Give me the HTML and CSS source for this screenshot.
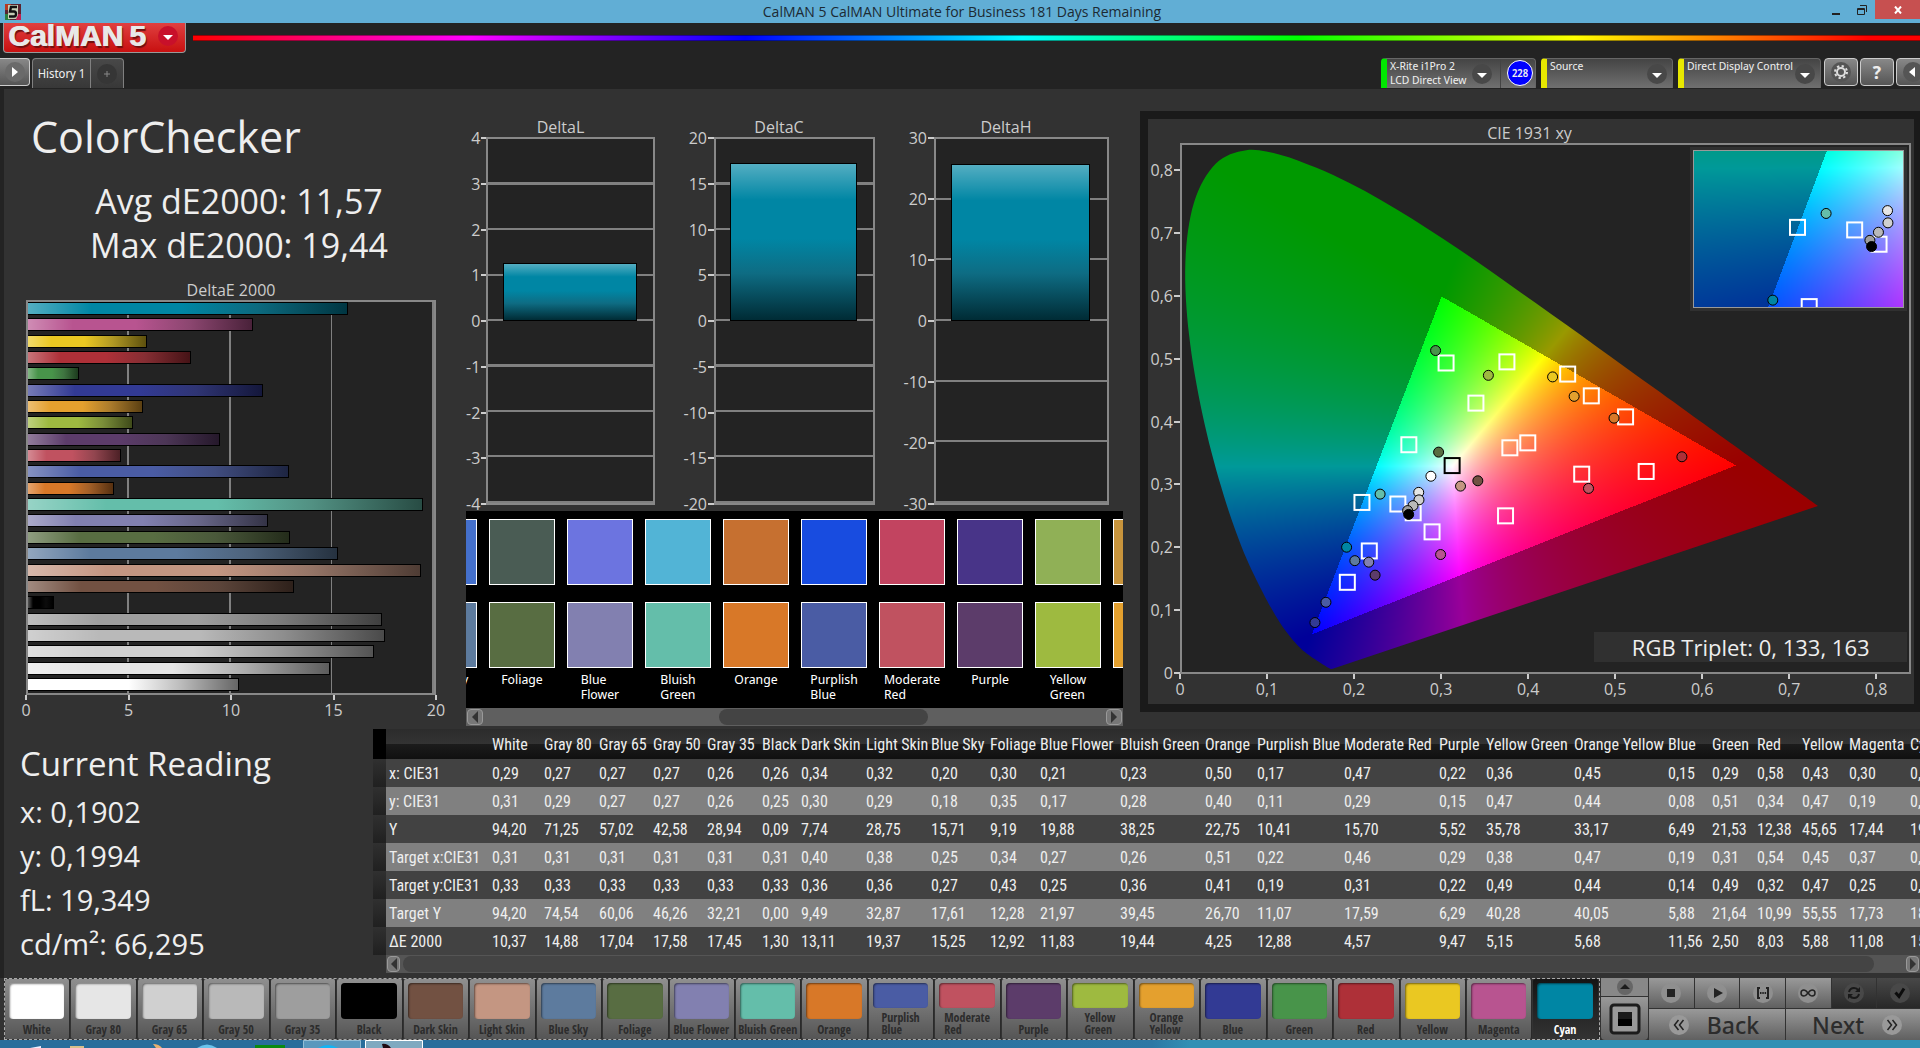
FILE: index.html
```html
<!DOCTYPE html>
<html lang="en">
	<head>
		<meta charset="utf-8">
		<title>CalMAN 5</title>
		<link rel="stylesheet" href="styles.css">
	</head>
	<body>
		<div class="titlebar">
			<svg class="app-icon" width="16" height="16" viewBox="0 0 16 16">
				<rect width="16" height="16" fill="#5a2430"/>
				<rect width="6" height="6" fill="#b33a22"/>
				<rect x="11" y="10" width="5" height="6" fill="#c02050"/>
				<rect y="10" width="5" height="6" fill="#2a8040"/>
				<path d="M3 1h10v10l-2 4H3z" fill="#c4ccb4"/>
				<path d="M12 3H6L5 7.500h4q2 0 2 2.500T9 12.500H4" fill="none" stroke="#111" stroke-width="2.400"/>
			</svg>
			<span class="window-title">CalMAN 5 CalMAN Ultimate for Business 181 Days Remaining</span>
			<div class="window-buttons">
				<button aria-label="Minimize"><svg width="8" height="10"><rect y="8" width="8" height="2" fill="#222"/></svg></button>
				<button aria-label="Restore"><svg width="10" height="10"><path d="M.5 3.500h7v6h-7zM3 .5h6.500V7M1 4.500h6" fill="none" stroke="#222"/></svg></button>
				<button class="close" aria-label="Close"><svg width="8" height="8"><path d="M1 0.500l6 7M7 0.500l-6 7" stroke="#fff" stroke-width="2"/></svg></button>
			</div>
		</div>

		<div class="brand-row">
			<button class="logo"><span>CalMAN</span><b>5</b>
				<svg class="round" width="20" height="20"><circle cx="10" cy="10" r="10" fill="#c8102a"/><path d="M5 9h10l-5 5z" fill="#fff"/></svg>
			</button>
			<div class="rainbow"></div>
		</div>

		<div class="tool-row">
			<button class="side-button" aria-label="Expand"><svg width="20" height="20"><circle cx="10" cy="10" r="10" fill="#6a6a6a"/><path d="M7 5l6 5-6 5z" fill="#fff"/></svg></button>
			<div class="tabs">
				<button>History 1</button>
				<button class="add" aria-label="Add tab"><svg width="20" height="20"><circle cx="10" cy="10" r="10" fill="#363636"/><path d="M7 10h6M10 7v6" stroke="#888"/></svg></button>
			</div>
			<div class="devices">
				<div class="device meter">
					<button class="device-name"><span>X-Rite i1Pro 2<br>LCD Direct View</span><svg width="20" height="20"><circle cx="10" cy="10" r="10" fill="#484848"/><path d="M5 9h10l-5 5z" fill="#fff"/></svg></button>
					<button class="count">228</button>
				</div>
				<div class="device source">
					<button class="device-name"><span>Source</span><svg width="20" height="20"><circle cx="10" cy="10" r="10" fill="#484848"/><path d="M5 9h10l-5 5z" fill="#fff"/></svg></button>
				</div>
				<div class="device display">
					<button class="device-name"><span>Direct Display Control</span><svg width="20" height="20"><circle cx="10" cy="10" r="10" fill="#484848"/><path d="M5 9h10l-5 5z" fill="#fff"/></svg></button>
				</div>
				<button class="square" aria-label="Settings"><svg width="20" height="20"><circle cx="10" cy="10" r="10" fill="#555"/><circle cx="10" cy="10" r="4" fill="none" stroke="#ddd" stroke-width="2"/><circle cx="10" cy="10" r="6" fill="none" stroke="#ddd" stroke-width="2" stroke-dasharray="2.300 2.400"/></svg></button>
				<button class="square help" aria-label="Help">?</button>
				<button class="square" aria-label="Collapse"><svg width="20" height="20"><circle cx="10" cy="10" r="10" fill="#555"/><path d="M12 5l-6 5 6 5z" fill="#fff"/></svg></button>
			</div>
		</div>

		<main>
			<section class="overview">
				<div class="summary">
					<h1>ColorChecker</h1>
					<p>Avg dE2000: 11,57<br>Max dE2000: 19,44</p>
					<h2 class="chart-title">DeltaE 2000</h2>
					<div class="plot de-plot" id="de_bars"></div>
					<div class="x-axis five"><span>0</span><span>5</span><span>10</span><span>15</span><span>20</span></div>
				</div>

				<div class="middle">
					<div class="deltas">
						<div class="delta">
							<h2 class="chart-title">DeltaL</h2>
							<div class="y-axis"><span>4</span><span>3</span><span>2</span><span>1</span><span>0</span><span>-1</span><span>-2</span><span>-3</span><span>-4</span></div>
							<div class="plot eight"><div class="positive"><div class="bar" style="height: 32%"></div></div></div>
						</div>
						<div class="delta">
							<h2 class="chart-title">DeltaC</h2>
							<div class="y-axis"><span>20</span><span>15</span><span>10</span><span>5</span><span>0</span><span>-5</span><span>-10</span><span>-15</span><span>-20</span></div>
							<div class="plot eight"><div class="positive"><div class="bar" style="height: 87%"></div></div></div>
						</div>
						<div class="delta">
							<h2 class="chart-title">DeltaH</h2>
							<div class="y-axis"><span>30</span><span>20</span><span>10</span><span>0</span><span>-10</span><span>-20</span><span>-30</span></div>
							<div class="plot six"><div class="positive"><div class="bar" style="height: 86%"></div></div></div>
						</div>
					</div>
					<div class="compare"><div class="strip" id="compare"></div></div>
					<div class="scrollbar compare-scroll">
						<button aria-label="Scroll left"><svg width="8" height="12"><path d="M7 0v12L1 6z" fill="#333"/></svg></button>
						<i class="thumb"></i>
						<button aria-label="Scroll right"><svg width="8" height="12"><path d="M1 0v12l6-6z" fill="#333"/></svg></button>
					</div>
				</div>

				<div class="cie">
					<h2 class="chart-title">CIE 1931 xy</h2>
					<div class="y-axis cie-y"><span>0,8</span><span>0,7</span><span>0,6</span><span>0,5</span><span>0,4</span><span>0,3</span><span>0,2</span><span>0,1</span><span>0</span></div>
					<div class="plot cie-plot">
						<canvas id="cie"></canvas>
						<svg class="points" id="cie_points"></svg>
						<div class="inset">
							<canvas id="inset"></canvas>
							<svg class="points" id="inset_points"></svg>
						</div>
						<div class="triplet">RGB Triplet: 0, 133, 163</div>
					</div>
					<div class="x-axis cie-x"><span>0</span><span>0,1</span><span>0,2</span><span>0,3</span><span>0,4</span><span>0,5</span><span>0,6</span><span>0,7</span><span>0,8</span></div>
				</div>
			</section>

			<section class="data">
				<div class="reading">
					<h2>Current Reading</h2>
					<p>x: 0,1902</p>
					<p>y: 0,1994</p>
					<p>fL: 19,349</p>
					<p>cd/m²: 66,295</p>
				</div>
				<div class="grid-wrap">
					<div class="grid-scroll"><table id="grid"></table></div>
					<div class="scrollbar grid-bar">
						<button aria-label="Scroll left"><svg width="8" height="12"><path d="M7 0v12L1 6z" fill="#333"/></svg></button>
						<i class="thumb"></i>
						<button aria-label="Scroll right"><svg width="8" height="12"><path d="M1 0v12l6-6z" fill="#333"/></svg></button>
					</div>
				</div>
			</section>
		</main>

		<div class="controls">
			<div class="tiles" id="tiles"></div>
			<div class="window-pick">
				<button class="up" aria-label="More patterns"><svg width="16" height="16"><circle cx="8" cy="8" r="8" fill="#666"/><path d="M3 10h10L8 5z" fill="#1c1c1c"/></svg></button>
				<button class="pattern" aria-label="Pattern window"><svg width="32" height="32"><rect x="2" y="2" width="28" height="28" rx="3" fill="#999" stroke="#1c1c1c" stroke-width="3"/><rect x="9" y="9" width="14" height="14" fill="#000"/><rect x="9" y="9" width="14" height="7" fill="#1a1a1a"/></svg></button>
			</div>
			<div class="transport">
				<button aria-label="Stop"><svg width="20" height="20"><circle cx="10" cy="10" r="10" fill="#8f8f8f"/><rect x="6" y="6" width="8" height="8" fill="#222"/></svg></button>
				<button aria-label="Play"><svg width="20" height="20"><circle cx="10" cy="10" r="10" fill="#8f8f8f"/><path d="M7 5l9 5-9 5z" fill="#222"/></svg></button>
				<button aria-label="Read series"><svg width="20" height="20"><circle cx="10" cy="10" r="10" fill="#8f8f8f"/><path d="M7 5H5v10h2M13 5h2v10h-2M7 10h1.500M9.300 10h1.500M11.600 10h1.500" fill="none" stroke="#222" stroke-width="2"/></svg></button>
				<button aria-label="Continuous"><svg width="20" height="20"><circle cx="10" cy="10" r="10" fill="#8f8f8f"/><path d="M10 10C8.500 8 7.500 7 6 7a3 3 0 000 6c1.500 0 2.500-1 4-3s2.500-3 4-3a3 3 0 010 6c-1.500 0-2.500-1-4-3z" fill="none" stroke="#222" stroke-width="1.500"/></svg></button>
				<button class="off" aria-label="Repeat"><svg width="20" height="20"><circle cx="10" cy="10" r="10" fill="#484848"/><path d="M5 9q1-4 5-4 3 0 4 2M15 11q-1 4-5 4-3 0-4-2" fill="none" stroke="#191919" stroke-width="2"/><path d="M16 4v5h-5zM4 16v-5h5z" fill="#191919"/></svg></button>
				<button class="off" aria-label="Accept"><svg width="20" height="20"><circle cx="10" cy="10" r="10" fill="#484848"/><path d="M5.500 9.500l3.500 4 5-8" fill="none" stroke="#0c0c0c" stroke-width="3"/></svg></button>
				<button class="nav back"><svg width="20" height="20"><circle cx="10" cy="10" r="10" fill="#999"/><path d="M9.500 5l-4 5 4 5M14.500 5l-4 5 4 5" fill="none" stroke="#222" stroke-width="1.500"/></svg>Back</button>
				<button class="nav next">Next<svg width="20" height="20"><circle cx="10" cy="10" r="10" fill="#999"/><path d="M5.500 5l4 5-4 5M10.500 5l4 5-4 5" fill="none" stroke="#222" stroke-width="1.500"/></svg></button>
			</div>
		</div>

		<div class="taskbar">
			<svg width="430" height="8">
				<path d="M30 8l11-2v2z" fill="#eef"/>
				<path d="M70 6h14v2H70z" fill="#d8c08a"/>
				<path d="M153 4q6 0 9 4h-6z" fill="#e8b070"/>
				<path d="M197 8q10-7 20 0z" fill="#6cc4ec"/>
				<path d="M255 5h30v3h-30z" fill="#0a8a10"/>
				<path d="M303.500 9V.5h57V9" fill="#5a98bd" stroke="#93bdd4"/>
				<path d="M318 8q10-6 20 0z" fill="#14b4f4"/>
				<path d="M365.500 9V.5h57V9" fill="#7fa9c0" stroke="#fff"/>
				<path d="M382 4q5-1 9 4h-8z" fill="#200810"/>
			</svg>
		</div>
		<script src="charts.js"></script>
	</body>
</html>
```
FILE: styles.css
```css
* {
	box-sizing: border-box;
}
body {
	margin: 0;
	min-height: 100vh;
	display: flex;
	flex-direction: column;
	overflow-x: hidden;
	background: #232323;
	color: #eee;
	font-family: "Open Sans", "Noto Sans", sans-serif;
	font-size: 16px;
}
button {
	margin: 0;
	padding: 0;
	border: 0;
	color: inherit;
	font: inherit;
	background: none;
	display: flex;
	align-items: center;
	justify-content: center;
}
h1, h2, p {
	margin: 0;
	font-weight: normal;
}
svg {
	display: block;
	flex: none;
}

/* window frame */
.titlebar {
	height: 23px;
	display: flex;
	align-items: center;
	background: #61aed5;
	color: #1c2a33;
	font-size: 14px;
}
.app-icon {
	margin-left: 5px;
}
.window-title {
	flex: 1;
	padding-left: 80px;
	text-align: center;
	white-space: nowrap;
}
.window-buttons {
	display: flex;
	align-self: flex-start;
}
.window-buttons button {
	width: 26px;
	height: 19px;
}
.window-buttons .close {
	width: 45px;
	background: #c75050;
}

/* logo and rainbow line */
.brand-row {
	height: 30px;
	display: flex;
	align-items: center;
	gap: 7px;
	padding-left: 3px;
}
.logo {
	width: 183px;
	height: 30px;
	gap: 6px;
	justify-content: flex-start;
	padding: 0 0 4px 4px;
	border: 1px solid #999;
	border-top: 0;
	border-radius: 0 0 4px 4px;
	background: linear-gradient(#e04040, #c81010);
	color: #e8e8e8;
	font-family: "Liberation Sans", sans-serif;
	font-weight: bold;
	font-size: 30px;
	line-height: 24px;
	text-shadow: 1px 0 0 #e8e8e8, 2px 2px 1px #701010;
}
.logo .round {
	margin-left: 6px;
}
.rainbow {
	flex: 1;
	height: 6px;
	border: 1px solid rgba(0, 0, 0, 0.4);
	border-width: 1px 0;
	background: linear-gradient(to right, #f00, #f0f 16%, #00f 32%, #0ff 48%, #0f0 64%, #ff0 80%, #f00 97%);
}

/* tabs and devices */
.tool-row {
	height: 36px;
	padding-top: 5px;
	display: flex;
	align-items: flex-start;
	font-family: "Noto Sans Display", "Open Sans", sans-serif;
	font-size: 12px;
}
.side-button {
	width: 30px;
	height: 28px;
	border: 1px solid #ccc;
	border-left: 0;
	border-radius: 0 4px 4px 0;
	background: linear-gradient(#888, #555);
}
.tabs {
	display: flex;
	margin-left: 2px;
	height: 30px;
	border: 1px solid #808080;
	border-bottom: 0;
	border-radius: 4px 4px 0 0;
	background: linear-gradient(#484848, #383838);
}
.tabs button {
	width: 57px;
}
.tabs .add {
	width: 33px;
	border-left: 1px solid #808080;
}
.devices {
	margin-left: auto;
	margin-right: -10px;
	display: flex;
	gap: 2px;
	font-size: 11px;
	line-height: 14px;
}
.device {
	display: flex;
	height: 30px;
	margin-right: 3px;
	border: 1px solid #666;
	border-width: 1px 1px 0 0;
	border-left: 6px solid #e8e800;
	border-radius: 4px 4px 0 0;
	background: linear-gradient(#444, #707070);
}
.meter {
	width: 155px;
	border-left-color: #00e800;
}
.source {
	width: 132px;
}
.display {
	width: 143px;
	margin-right: 1px;
}
.device-name {
	flex: 1;
	justify-content: space-between;
	padding: 0 5px 0 3px;
	white-space: nowrap;
}
.device-name span {
	align-self: flex-start;
	text-align: left;
}
.meter .device-name {
	padding-right: 8px;
	border-right: 1px solid #444;
}
.count {
	width: 26px;
	height: 26px;
	margin: 1px 2px 0 6px;
	border: 1px solid #fff;
	border-radius: 50%;
	background: #00f;
	font-weight: 600;
	font-size: 10px;
}
.square {
	width: 34px;
	height: 28px;
	border: 1px solid #ccc;
	border-radius: 4px;
	background: linear-gradient(#888, #555);
}
.help {
	font-weight: bold;
	font-size: 18px;
}

main {
	flex: 1;
	display: flex;
	flex-direction: column;
	margin-left: 4px;
	padding-bottom: 5px;
	background: #323232;
}
.overview {
	flex: 1;
	display: grid;
	grid-template-columns: 457fr 670fr 789fr;
}

/* charts */
.chart-title {
	font-size: 16px;
	line-height: 20px;
	text-align: center;
	color: #ccc;
}
.plot {
	border: 2px solid #888;
	background-color: #232323;
}
.y-axis, .x-axis {
	display: grid;
	color: #ccc;
	line-height: 20px;
}
.y-axis {
	grid-template-rows: repeat(8, 1fr) 0;
	padding: 1px 0;
}
.y-axis span {
	height: 0;
	display: flex;
	align-items: center;
	justify-content: flex-end;
}
.y-axis span:after {
	content: "";
	flex: none;
	width: 6px;
	height: 2px;
	margin-left: 1px;
	background: #ccc;
}
.x-axis span {
	width: 0;
	display: flex;
	flex-direction: column;
	align-items: center;
}
.x-axis span:before {
	content: "";
	width: 2px;
	height: 5px;
	background: #ccc;
}
.bar {
	border: 1px solid #000;
	background: #0086a4 linear-gradient(rgba(255, 255, 255, 0.33), rgba(255, 255, 255, 0) 23%, rgba(0, 0, 0, 0) 48%, rgba(40, 60, 70, 0.35) 70%, rgba(0, 0, 0, 0.68));
}

.summary {
	display: flex;
	flex-direction: column;
	padding: 18px 25px 0 22px;
}
.summary h1 {
	padding-left: 5px;
	font-size: 43px;
	line-height: 60px;
}
.summary p {
	margin: 12px 0 13px;
	padding-left: 16px;
	font-size: 34px;
	line-height: 44px;
	text-align: center;
}
.de-plot {
	flex: 1;
	display: flex;
	flex-direction: column;
	justify-content: space-between;
	padding-bottom: 2px;
	background-image: repeating-linear-gradient(to right, transparent 0, transparent calc(25% - 2px), #808080 calc(25% - 2px), #808080 25%);
}
.de-plot .bar {
	height: 13px;
	border-left: 0;
	background-image: linear-gradient(to right, rgba(255, 255, 255, 0.33), rgba(255, 255, 255, 0) 20%, rgba(0, 0, 0, 0) 48%, rgba(40, 40, 40, 0.3) 72%, rgba(0, 0, 0, 0.6));
}
.five {
	grid-template-columns: repeat(4, 1fr) 0;
	height: 34px;
}

.middle {
	display: flex;
	flex-direction: column;
	padding: 28px 8px 2px 5px;
	min-width: 0;
}
.deltas {
	flex: 1;
	display: grid;
	grid-template-columns: 189fr 192fr 206fr;
	gap: 28px;
	padding-right: 14px;
	margin-bottom: 6px;
}
.delta {
	display: grid;
	grid-template-columns: 31px 1fr;
	grid-template-rows: 20px 1fr;
}
.delta:first-child {
	grid-template-columns: 20px 1fr;
}
.delta .chart-title {
	grid-column: span 2;
}
.eight {
	background-image: repeating-linear-gradient(to top, #808080 0, #808080 2px, transparent 2px, transparent 12.5%);
}
.six {
	background-image: repeating-linear-gradient(to top, #808080 0, #808080 2px, transparent 2px, transparent calc(100% / 6));
}
.delta:last-child .y-axis {
	grid-template-rows: repeat(6, 1fr) 0;
}
.positive {
	height: 50%;
	padding: 0 10% 0 9%;
	display: flex;
	flex-direction: column;
	justify-content: flex-end;
}

/* measured over target */
.compare {
	height: 197px;
	padding-top: 8px;
	overflow: hidden;
	background: #000;
}
.strip {
	display: flex;
	gap: 12px;
	margin-left: -55px;
}
.pair {
	flex: none;
	width: 66px;
	display: flex;
	flex-direction: column;
	align-items: center;
	color: #fff;
	font-family: "Noto Sans Display", "Open Sans", sans-serif;
	font-size: 13px;
	line-height: 15px;
}
.pair i {
	width: 66px;
	height: 66px;
	margin-bottom: 17px;
	border: 1px solid #fff;
}
.pair i + i {
	margin-bottom: 4px;
}

.scrollbar {
	height: 18px;
	padding: 1px;
	display: flex;
	align-items: stretch;
	background: #5f5f5f;
}
.scrollbar button {
	width: 16px;
	border: 1px solid #999;
	border-radius: 4px;
	background: #777;
}
.scrollbar .thumb {
	border-radius: 8px;
	background: #444;
}
.compare-scroll {
	margin-bottom: 1px;
}
.compare-scroll .thumb {
	width: 32%;
	margin: 0 auto 0 36%;
}

.cie {
	margin: 22px 0 17px 9px;
	padding: 4px 3px 0 0;
	border: 8px solid #1a1a1a;
	border-right-width: 6px;
	display: grid;
	grid-template-columns: 32px 1fr;
	grid-template-rows: 20px 1fr 30px;
}
.cie .chart-title {
	grid-column: span 2;
}
.cie-y {
	grid-template-rows: repeat(8, 10fr) 0;
	padding-top: calc(100% - 5px);
}
.cie-x {
	grid-column: 2;
	grid-template-columns: repeat(8, 10fr) 4fr;
}
.cie-plot {
	position: relative;
}
.cie-plot canvas, .points {
	position: absolute;
	top: 0;
	left: 0;
	width: 100%;
	height: 100%;
}
.points circle {
	stroke: #000;
	stroke-width: 1px;
}
.points rect {
	fill: none;
	stroke: #fff;
	stroke-width: 2px;
	transform: translate(-8px, -8px);
}
.points .white-point {
	stroke: #000;
}
.inset {
	position: absolute;
	top: 5px;
	right: 5px;
	width: 29%;
	height: 30%;
	outline: 3px solid #303030;
	border: 1px solid #999;
}
.triplet {
	position: absolute;
	right: 2px;
	bottom: 10px;
	width: 43%;
	line-height: 30px;
	text-align: center;
	font-size: 22px;
	background: #303030;
}

/* readings */
.data {
	display: grid;
	grid-template-columns: 369px minmax(0, 1fr);
}
.reading {
	padding: 13px 0 0 16px;
	font-size: 29px;
	line-height: 44px;
}
.reading h2 {
	margin-bottom: 4px;
	font-size: 33px;
}
.grid-scroll {
	overflow: hidden;
}
#grid {
	width: 1594px;
	table-layout: fixed;
	border-collapse: collapse;
	font-family: "Roboto Condensed", "Roboto", sans-serif;
	font-size: 16px;
	white-space: nowrap;
}
#grid th, #grid td {
	height: 28px;
	padding: 0 0 0 3px;
	font-weight: normal;
	text-align: left;
}
#grid thead th {
	height: 30px;
	background: linear-gradient(#2c2c2c, #333 50%, #1c1c1c 50%, #101010);
}
#grid thead td {
	background: #000;
}
#grid tbody tr {
	background: #424242;
}
#grid tbody tr:nth-child(even) {
	background: #808080;
}
#grid tbody td:first-child {
	background: linear-gradient(#303030, #202020);
}
.grid-bar {
	margin-left: 13px;
	background: #555;
}
.grid-bar .thumb {
	flex: 1;
	margin: 0 32px 0 3px;
}
.grid-bar button {
	width: 13px;
}

/* pattern tiles and transport */
.controls {
	display: flex;
	height: 62px;
	padding-left: 4px;
	background: #323232;
}
.tiles {
	flex: 1;
	display: flex;
	min-width: 0;
	gap: 1px;
	border: 1px dashed #aaa;
}
.tiles button {
	flex: 1 1 0;
	min-width: 0;
	flex-direction: column;
	justify-content: space-between;
	padding: 4px 5px 1px 4px;
	border-right: 1px solid #2a2a2a;
	border-radius: 2px;
	background: linear-gradient(#8f8f8f, #555);
	color: #2c2c2c;
	font-family: "Open Sans Condensed", "Roboto Condensed", sans-serif;
	font-weight: bold;
	font-size: 12px;
	line-height: 12px;
	text-align: left;
	white-space: nowrap;
}
.tiles i {
	width: 100%;
	height: 36px;
	border-radius: 4px;
	box-shadow: inset 1px 1px 2px rgba(0, 0, 0, 0.5);
}
.tiles .two i {
	height: 25px;
}
.tiles span {
	padding-bottom: 2px;
}
.tiles .selected {
	background: linear-gradient(#151515, #333);
	color: #fff;
}
.window-pick {
	width: 49px;
	display: flex;
	flex-direction: column;
	padding: 0 1px;
	gap: 1px;
}
.window-pick button, .transport button {
	background: linear-gradient(#999, #606060);
}
.window-pick .up {
	height: 18px;
	background: #888;
}
.window-pick .pattern {
	flex: 1;
	border-radius: 0 0 4px 4px;
}
.transport {
	width: 273px;
	margin-right: -2px;
	display: grid;
	grid-template-columns: repeat(6, 1fr);
	grid-template-rows: 30px 31px;
	gap: 1px;
}
.transport .off {
	background: linear-gradient(#484848, #282828);
}
.transport .nav {
	grid-column: span 3;
	gap: 18px;
	color: #2c2c2c;
	font-family: "Noto Sans", "Open Sans", sans-serif;
	font-size: 23px;
	font-weight: 500;
	line-height: 28px;
}
.transport .back {
	padding-right: 6px;
}
.transport .next {
	padding-left: 6px;
}

.taskbar {
	height: 8px;
	background: linear-gradient(to right, #286d9b 40%, #2c78a5 60%, #3090b4 62%);
}
```
FILE: charts.js
```js
// name, colour, measured colour, x, y, Y, target x, target y, target Y, dE 2000, column width
var readings = [
	['White', '#ffffff', '#f4f8ff', 0.2876, 0.3128, '94,20', 0.3127, 0.329, '94,20', '10,37', 52],
	['Gray 80', '#e6e6e6', '#d8e4ff', 0.2735, 0.287, '71,25', 0.3127, 0.329, '74,54', '14,88', 55],
	['Gray 65', '#d0d0d0', '#c0ccf0', 0.2738, 0.275, '57,02', 0.3127, 0.329, '60,06', '17,04', 54],
	['Gray 50', '#b9b9b9', '#a8b4e0', 0.2669, 0.2658, '42,58', 0.3127, 0.329, '46,26', '17,58', 54],
	['Gray 35', '#9e9e9e', '#8c9ccc', 0.2607, 0.2579, '28,94', 0.3127, 0.329, '32,21', '17,45', 55],
	['Black', '#000000', '#000000', 0.2619, 0.2518, '0,09', 0.3127, 0.329, '0,00', '1,30', 39],
	['Dark Skin', '#725142', '#6c5060', 0.3418, 0.3055, '7,74', 0.4001, 0.3653, '9,49', '13,11', 65],
	['Light Skin', '#c49682', '#b898b8', 0.3218, 0.297, '28,75', 0.3794, 0.3574, '32,87', '19,37', 65],
	['Blue Sky', '#5d7b9e', '#4470cc', 0.1997, 0.1779, '15,71', 0.25, 0.2676, '17,61', '15,25', 59],
	['Foliage', '#586d42', '#4a5c54', 0.2965, 0.3513, '9,19', 0.3402, 0.4288, '12,28', '12,92', 50],
	['Blue Flower', '#8280b0', '#6c74e0', 0.2158, 0.1755, '19,88', 0.2677, 0.2536, '21,97', '11,83', 80],
	['Bluish Green', '#64beaa', '#52b4d6', 0.2289, 0.2842, '38,25', 0.2627, 0.3623, '39,45', '19,44', 85],
	['Orange', '#d87828', '#c67030', 0.4992, 0.4056, '22,75', 0.5131, 0.4068, '26,70', '4,25', 52],
	['Purplish Blue', '#4a5ca4', '#184ce0', 0.1663, 0.1114, '10,41', 0.217, 0.1926, '11,07', '12,88', 87],
	['Moderate Red', '#c05260', '#c24460', 0.4697, 0.2933, '15,70', 0.4624, 0.3153, '17,59', '4,57', 95],
	['Purple', '#5c3c6a', '#483488', 0.2231, 0.1547, '5,52', 0.2895, 0.2231, '6,29', '9,47', 47],
	['Yellow Green', '#9eba40', '#90b056', 0.354, 0.474, '35,78', 0.376, 0.4947, '40,28', '5,15', 88],
	['Orange Yellow', '#e4a02e', '#c8943c', 0.4531, 0.4404, '33,17', 0.4735, 0.4404, '40,05', '5,68', 94],
	['Blue', '#323a94', '#1c2cc0', 0.1536, 0.079, '6,49', 0.1916, 0.1425, '5,88', '11,56', 44],
	['Green', '#48944a', '#409850', 0.293, 0.5136, '21,53', 0.3057, 0.4929, '21,64', '2,50', 45],
	['Red', '#ae3038', '#b02c34', 0.5776, 0.3439, '12,38', 0.5369, 0.3196, '10,99', '8,03', 45],
	['Yellow', '#eac822', '#e0c030', 0.4282, 0.4715, '45,65', 0.4462, 0.4752, '55,55', '5,88', 47],
	['Magenta', '#b85490', '#b04cc0', 0.2988, 0.1877, '17,44', 0.3744, 0.2487, '17,73', '11,08', 61],
	['Cyan', '#0086a4', '#0078d0', 0.1902, 0.1994, '19,35', 0.2085, 0.2701, '18,94', '15,75', 60]
];
// x and y rows as the instrument reports them, rounded to two places
var rows = {
	'x: CIE31': '0,29 0,27 0,27 0,27 0,26 0,26 0,34 0,32 0,20 0,30 0,21 0,23 0,50 0,17 0,47 0,22 0,36 0,45 0,15 0,29 0,58 0,43 0,30 0,19',
	'y: CIE31': '0,31 0,29 0,27 0,27 0,26 0,25 0,30 0,29 0,18 0,35 0,17 0,28 0,40 0,11 0,29 0,15 0,47 0,44 0,08 0,51 0,34 0,47 0,19 0,20',
	'Y': 5,
	'Target x:CIE31': '0,31 0,31 0,31 0,31 0,31 0,31 0,40 0,38 0,25 0,34 0,27 0,26 0,51 0,22 0,46 0,29 0,38 0,47 0,19 0,31 0,54 0,45 0,37 0,21',
	'Target y:CIE31': '0,33 0,33 0,33 0,33 0,33 0,33 0,36 0,36 0,27 0,43 0,25 0,36 0,41 0,19 0,31 0,22 0,49 0,44 0,14 0,49 0,32 0,47 0,25 0,27',
	'Target Y': 8,
	'ΔE 2000': 9
};
var locus = [
	[0.1741, 0.005], [0.1721, 0.0048], [0.1689, 0.0069], [0.1644, 0.0109], [0.1566, 0.0177], [0.144, 0.0297],
	[0.1355, 0.0399], [0.1241, 0.0578], [0.1096, 0.0868], [0.0913, 0.1327], [0.0687, 0.2007], [0.0454, 0.295],
	[0.0235, 0.4127], [0.0082, 0.5384], [0.0039, 0.6548], [0.0139, 0.7502], [0.0389, 0.812], [0.0743, 0.8338],
	[0.1142, 0.8262], [0.1547, 0.8059], [0.1929, 0.7816], [0.2296, 0.7543], [0.2658, 0.7243], [0.3016, 0.6923],
	[0.3373, 0.6589], [0.3731, 0.6245], [0.4087, 0.5896], [0.4441, 0.5547], [0.4788, 0.5202], [0.5125, 0.4866],
	[0.5448, 0.4544], [0.5752, 0.4242], [0.6029, 0.3965], [0.627, 0.3725], [0.6482, 0.3514], [0.6658, 0.334],
	[0.6915, 0.3083], [0.714, 0.2859], [0.73, 0.27], [0.7347, 0.2653]
];
var full = {x0: 0, x1: 0.84, y0: 0, y1: 0.842},
	zoomed = {x0: 0.133, x1: 0.2846, y0: 0.1926, y1: 0.3453};

function el(tag, cls, text) {
	var node = document.createElement(tag);
	if (cls) node.className = cls;
	if (text) node.textContent = text;
	return node;
}

// brightest sRGB colour of a chromaticity, dimmed outside the gamut
function color(x, y) {
	var X = x / y, Z = (1 - x - y) / y,
		r = 3.2406 * X - 1.5372 - 0.4986 * Z,
		g = -0.9689 * X + 1.8758 + 0.0415 * Z,
		b = 0.0557 * X - 0.204 + 1.057 * Z,
		level = Math.min(r, g, b) < 0 ? 153 : 255,
		max = Math.max(r, g, b);
	return [r, g, b].map(function (v) {
		return level * Math.max(v, 0) / max;
	});
}

function drawCie(id, box) {
	var canvas = document.getElementById(id),
		w = canvas.width = canvas.clientWidth,
		h = canvas.height = canvas.clientHeight,
		ctx = canvas.getContext('2d'),
		img = ctx.createImageData(w, h);
	for (var j = 0; j < h; j++) {
		for (var i = 0; i < w; i++) {
			var c = color(box.x0 + (i + 0.5) / w * (box.x1 - box.x0), box.y1 - (j + 0.5) / h * (box.y1 - box.y0));
			img.data.set([c[0], c[1], c[2], 255], (j * w + i) * 4);
		}
	}
	ctx.putImageData(img, 0, 0);
	// keep only what is inside the spectral locus
	var pts = locus.map(function (p) {
		return [(p[0] - box.x0) / (box.x1 - box.x0) * w, (box.y1 - p[1]) / (box.y1 - box.y0) * h];
	});
	ctx.globalCompositeOperation = 'destination-in';
	ctx.beginPath();
	ctx.moveTo(pts[0][0], pts[0][1]);
	for (var k = 0; k < pts.length - 1; k++) {
		var a = pts[Math.max(k - 1, 0)], p = pts[k], q = pts[k + 1], d = pts[Math.min(k + 2, pts.length - 1)];
		ctx.bezierCurveTo(p[0] + (q[0] - a[0]) / 6, p[1] + (q[1] - a[1]) / 6, q[0] - (d[0] - p[0]) / 6, q[1] - (d[1] - p[1]) / 6, q[0], q[1]);
	}
	ctx.fill();
}

function drawPoints(id, box) {
	var svg = document.getElementById(id);
	function add(tag, attrs) {
		var node = document.createElementNS('http://www.w3.org/2000/svg', tag);
		for (var key in attrs) node.setAttribute(key, attrs[key]);
		svg.appendChild(node);
	}
	function px(x) { return (x - box.x0) / (box.x1 - box.x0) * 100 + '%'; }
	function py(y) { return (box.y1 - y) / (box.y1 - box.y0) * 100 + '%'; }
	function inside(x, y) { return x > box.x0 && x < box.x1 && y > box.y0 - 0.001 && y < box.y1; }
	readings.forEach(function (r, i) {
		if ((i === 0 || i > 5) && inside(r[6], r[7])) {
			add('rect', {x: px(r[6]), y: py(r[7]), width: 15, height: 15, 'class': i ? 'target' : 'white-point'});
		}
	});
	readings.forEach(function (r, i) {
		if (inside(r[3], r[4]) && !(i === 0 && box === zoomed)) {
			add('circle', {cx: px(r[3]), cy: py(r[4]), r: 5, fill: r[1]});
		}
	});
}

function drawAll() {
	drawCie('cie', full);
	drawCie('inset', zoomed);
}

var bars = document.getElementById('de_bars'),
	compare = document.getElementById('compare'),
	tiles = document.getElementById('tiles'),
	grid = document.getElementById('grid');

readings.slice().reverse().forEach(function (r) {
	var bar = el('div', 'bar');
	bar.style.width = parseFloat(r[9].replace(',', '.')) * 5 + '%';
	bar.style.backgroundColor = r[1];
	bars.appendChild(bar);
});

readings.slice(8, 18).forEach(function (r) {
	var pair = el('div', 'pair'), measured = el('i'), target = el('i'), label = el('span');
	measured.style.backgroundColor = r[2];
	target.style.backgroundColor = r[1];
	label.innerHTML = r[0] === 'Blue Sky' ? r[0] : r[0].replace(' ', '<br>');
	pair.append(measured, target, label);
	compare.appendChild(pair);
});

readings.forEach(function (r) {
	var two = ['Purplish Blue', 'Moderate Red', 'Yellow Green', 'Orange Yellow'].indexOf(r[0]) > -1,
		tile = el('button', two ? 'two' : ''), chip = el('i'), label = el('span');
	if (r[0] === 'Cyan') tile.className = 'selected';
	chip.style.backgroundColor = r[1];
	label.innerHTML = two ? r[0].replace(' ', '<br>') : r[0];
	tile.append(chip, label);
	tiles.appendChild(tile);
});

var cols = el('colgroup'), head = grid.createTHead().insertRow(), body = el('tbody');
[13, 103].concat(readings.map(function (r) { return r[10]; })).forEach(function (w) {
	var col = el('col');
	col.style.width = w + 'px';
	cols.appendChild(col);
});
grid.prepend(cols);
grid.appendChild(body);
head.insertCell();
head.appendChild(el('th'));
readings.forEach(function (r) {
	head.appendChild(el('th', '', r[0]));
});
Object.keys(rows).forEach(function (name) {
	var tr = body.insertRow(), data = rows[name];
	tr.insertCell();
	tr.appendChild(el('th', '', name));
	readings.forEach(function (r, i) {
		tr.insertCell().textContent = typeof data === 'number' ? r[data] : data.split(' ')[i];
	});
});

drawPoints('cie_points', full);
drawPoints('inset_points', zoomed);
drawAll();
window.addEventListener('resize', drawAll);
```
